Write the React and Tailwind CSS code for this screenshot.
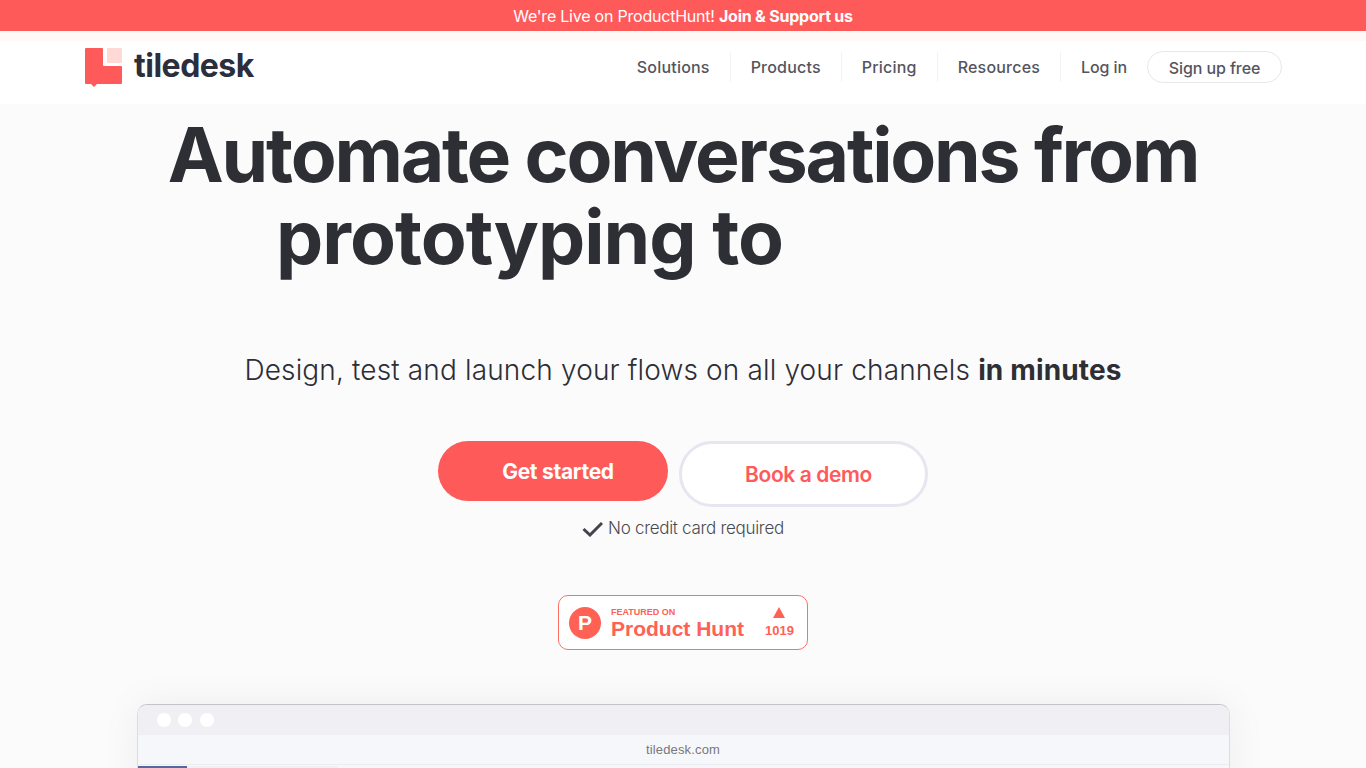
import React from "react";

const navLinks = ["Solutions", "Products", "Pricing", "Resources"];

function Logo() {
  return (
    <svg width="37" height="40" viewBox="0 0 37 40" className="shrink-0 mb-[2px]">
      <path
        d="M1 0h16a1 1 0 0 1 1 1v16a1 1 0 0 0 1 1h17a1 1 0 0 1 1 1v16a1 1 0 0 1-1 1H12l-3 3-3-3H1a1 1 0 0 1-1-1V1a1 1 0 0 1 1-1z"
        fill="#ff5a5a"
      />
      <rect x="22" y="0" width="15" height="15" rx="1" fill="#ffd9d6" />
    </svg>
  );
}

function ProductHuntBadge() {
  return (
    <div className="w-[250px] h-[55px] mt-[53px] bg-white border border-[#ff6f66] rounded-[10px] flex items-center pl-[10px] font-['Liberation_Sans',sans-serif] text-[#ff6154]">
      <div className="w-[32px] h-[32px] rounded-full bg-[#ff6154] text-white flex items-center justify-center text-[21px] font-bold">
        P
      </div>
      <div className="ml-[10px] flex flex-col w-[146px]">
        <span className="text-[9px] leading-[10px] font-bold mt-[2px]">FEATURED ON</span>
        <span className="text-[21px] leading-[24px] font-bold">Product Hunt</span>
      </div>
      <div className="flex flex-col items-center ml-[8px]">
        <svg width="12" height="11" viewBox="0 0 12 11">
          <polygon points="6,0 12,11 0,11" fill="#ff6154" />
        </svg>
        <span className="text-[13px] leading-[16px] font-bold mt-[5px]">1019</span>
      </div>
    </div>
  );
}

export default function App() {
  return (
    <div className="h-[768px] overflow-hidden bg-[#fbfbfc] text-[#2e2e35] font-['Inter',sans-serif]">
      {/* Banner */}
      <div className="h-[31px] bg-[#ff5a5a] text-white text-[16px] tracking-[-0.22px] flex items-center justify-center">
        We're Live on ProductHunt!&nbsp;<b className="font-bold">Join &amp; Support us</b>
      </div>

      {/* Header */}
      <header className="h-[73px] bg-[linear-gradient(#fff8f7_10px,#ffffff_10px)] flex items-center justify-between pl-[85px] pr-[84px]">
        <div className="flex items-center gap-[12px] mt-[3px]">
          <Logo />
          <span className="text-[32px] font-bold tracking-[-0.5px] text-[#2b2e3d] -mt-[6px]">tiledesk</span>
        </div>
        <nav className="flex items-center text-[16px] font-medium text-[#55555e]">
          {navLinks.map((link) => (
            <span key={link} className="h-[30px] flex items-center px-[20px] border-r border-[#f3f3f5] tracking-[0.2px] -mt-[1px]">
              {link}
            </span>
          ))}
          <span className="pl-[20px] pr-[20px] tracking-[-0.1px] -mt-[1px]">Log in</span>
          <span className="h-[32px] w-[135px] pt-[2px] flex items-center justify-center rounded-full border border-[#e8e8ec] -mt-[1px] tracking-[-0.1px]">
            Sign up free
          </span>
        </nav>
      </header>

      {/* Hero */}
      <main className="flex flex-col items-center">
        <h1 className="w-full text-center text-[75px] leading-[82px] font-bold tracking-[-2.2px] mt-[10px]">
          Automate conversations from
          <br />
          <span className="tracking-[-1px]">prototyping to</span>
          <span className="inline-block w-[307px]" />
        </h1>
        <p className="mt-[72px] text-[28px] leading-[40px] font-light tracking-[0.15px] text-[#2e2e35]">
          Design, test and launch your flows on all your channels <b className="font-bold">in minutes</b>
        </p>
        <div className="mt-[51px] flex items-start gap-[11px]">
          <button className="w-[230px] h-[60px] pl-[10px] pt-[2px] rounded-full bg-[#ff5a5a] text-white text-[21px] font-bold tracking-[-0.3px]">
            Get started
          </button>
          <button className="w-[249px] h-[66px] pl-[10px] pt-[2px] rounded-full bg-white border-[3px] border-[#e6e6f0] text-[#ff5a5a] text-[21px] font-semibold tracking-[-0.4px]">
            Book a demo
          </button>
        </div>
        <div className="mt-[9px] h-[26px] flex items-center gap-[5px] text-[17px] font-light text-[#4a4a52] tracking-[-0.3px]">
          <svg width="21" height="16" viewBox="0 0 21 16" fill="none" stroke="#44444c" strokeWidth="3">
            <polyline points="1.5,8 8,14 20,2" />
          </svg>
          No credit card required
        </div>
        <ProductHuntBadge />

        {/* Browser preview */}
        <div className="mt-[54px] w-[1093px] h-[200px] shrink-0 rounded-t-[10px] border border-[#dcdde3] border-t-[#c4c4c8] bg-[#f6f7fb] shadow-[0_0_40px_rgba(0,0,0,0.06)] overflow-hidden">
          <div className="h-[30px] bg-[#f0f0f4] flex items-center gap-[7.5px] pl-[19px]">
            <span className="w-[14px] h-[14px] rounded-full bg-white" />
            <span className="w-[14px] h-[14px] rounded-full bg-white" />
            <span className="w-[14px] h-[14px] rounded-full bg-white" />
          </div>
          <div className="h-[30px] pt-[1px] flex items-center justify-center text-[13px] text-[#77777f] font-['Liberation_Sans',sans-serif] tracking-[0.15px] border-b border-[#ecedf3]">
            tiledesk.com
          </div>
          <div className="h-[4px] w-[200px] flex mt-[1px]">
            <span className="w-[49px] bg-[#54689f]" />
            <span className="w-[151px] bg-[#f0f1f5]" />
          </div>
        </div>
      </main>
    </div>
  );
}
